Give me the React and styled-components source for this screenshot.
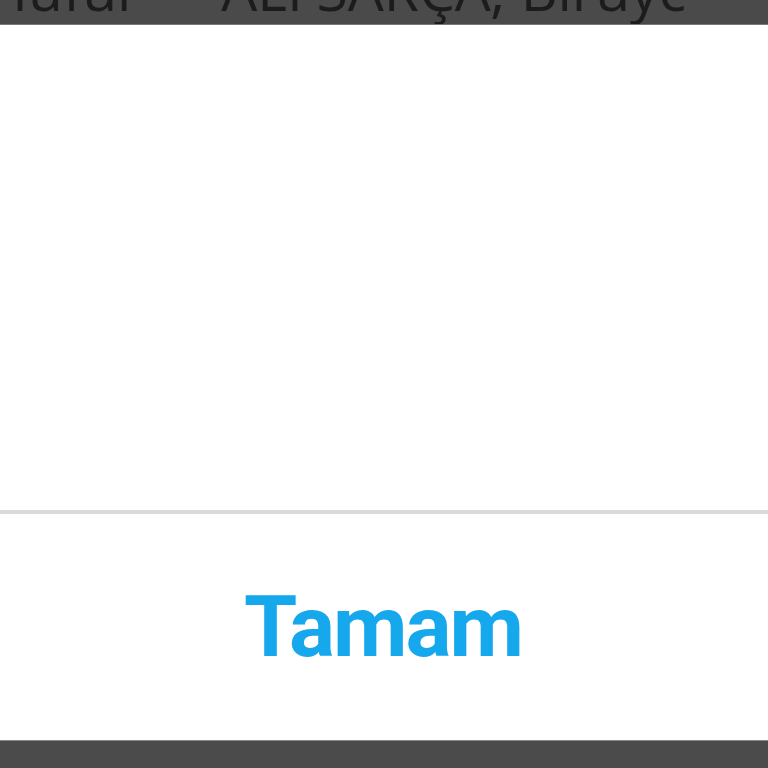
import React from "react";
import styled, { createGlobalStyle } from "styled-components";

const Global = createGlobalStyle`
  html, body { margin: 0; padding: 0; background: #ffffff; }
  body { font-family: Roboto, "Liberation Sans", sans-serif; }
`;

const Screen = styled.div`
  width: 768px;
  height: 768px;
  display: flex;
  flex-direction: column;
  overflow: hidden;
  background: #ffffff;
`;

const TopBar = styled.div`
  height: 24px;
  flex: none;
  background: #4a4a4a;
  border-bottom: 1px solid #7a7a7a;
  overflow: hidden;
  display: flex;
  align-items: flex-start;
`;

const TopText = styled.div`
  font-family: "Open Sans", "Liberation Sans", sans-serif;
  font-size: 57px;
  line-height: 57px;
  color: #1c1c1c;
  white-space: nowrap;
  margin-left: -14px;
  margin-top: -39px;
`;

const Body = styled.div`
  height: 485px;
  flex: none;
  background: #ffffff;
`;

const Divider = styled.div`
  height: 4px;
  flex: none;
  background: #dadada;
`;

const ButtonArea = styled.div`
  height: 226px;
  flex: none;
  display: flex;
  align-items: center;
  justify-content: center;
`;

const OkButton = styled.button`
  border: none;
  background: transparent;
  font-family: Roboto, "Liberation Sans", sans-serif;
  font-weight: 700;
  font-size: 86px;
  letter-spacing: -2px;
  color: #16a8ec;
  padding: 0;
  margin: 0 0 0 -2px;
  line-height: 1;
  cursor: pointer;
`;

const BottomBar = styled.div`
  flex: 1;
  background: #4b4b4b;
  border-top: 1px solid #888888;
`;

export default function App() {
  return (
    <Screen>
      <Global />
      <TopBar>
        <TopText>Hüfür – "ALFSARÇA; Biruyc</TopText>
      </TopBar>
      <Body />
      <Divider />
      <ButtonArea>
        <OkButton>Tamam</OkButton>
      </ButtonArea>
      <BottomBar />
    </Screen>
  );
}
